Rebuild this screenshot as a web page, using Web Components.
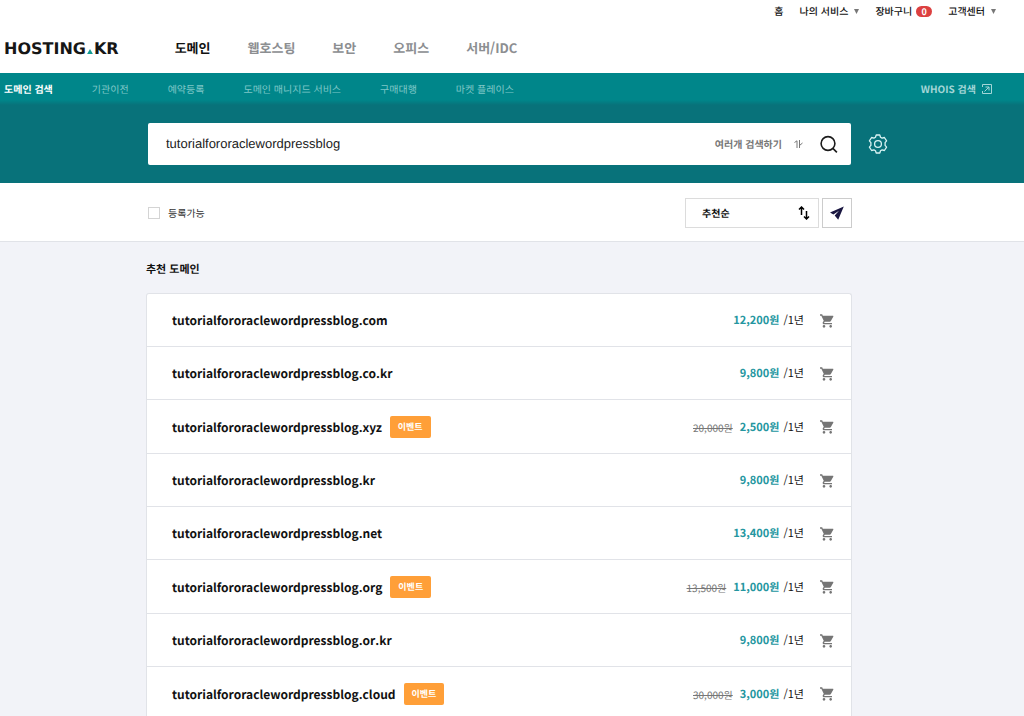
<!DOCTYPE html>
<html lang="ko">
<head>
<meta charset="utf-8">
<meta name="viewport" content="width=device-width, initial-scale=1">
<title>HOSTING.KR 도메인 검색</title>
<style>
  :root {
    --teal: #00868a;
    --teal-dark: #08727a;
    --ink: #111;
    --gutter: 26px;
    --column: 706px;
  }
  body {
    margin: 0;
    min-height: 100vh;
    overflow-x: hidden;
    background: #f2f3f8;
    color: var(--ink);
    font-family: "Noto Sans CJK KR", "Noto Sans", sans-serif;
    font-size: 10px;
    line-height: 16px;
    text-rendering: geometricPrecision;
  }
</style>
</head>
<body>
<site-header>
  <util-link slot="util">홈</util-link>
  <util-link slot="util" menu>나의 서비스</util-link>
  <util-link slot="util" count="0">장바구니</util-link>
  <util-link slot="util" menu>고객센터</util-link>
  <nav-link slot="nav" current>도메인</nav-link>
  <nav-link slot="nav">웹호스팅</nav-link>
  <nav-link slot="nav">보안</nav-link>
  <nav-link slot="nav">오피스</nav-link>
  <nav-link slot="nav">서버/IDC</nav-link>
</site-header>
<sub-nav>
  <sub-link current>도메인 검색</sub-link>
  <sub-link>기관이전</sub-link>
  <sub-link>예약등록</sub-link>
  <sub-link>도메인 매니지드 서비스</sub-link>
  <sub-link>구매대행</sub-link>
  <sub-link>마켓 플레이스</sub-link>
</sub-nav>
<domain-search value="tutorialfororaclewordpressblog"></domain-search>
<filter-bar></filter-bar>
<domain-list>
  <span slot="title">추천 도메인</span>
  <domain-row name="tutorialfororaclewordpressblog.com" price="12,200원"></domain-row>
  <domain-row name="tutorialfororaclewordpressblog.co.kr" price="9,800원"></domain-row>
  <domain-row name="tutorialfororaclewordpressblog.xyz" price="2,500원" was="20,000원"></domain-row>
  <domain-row name="tutorialfororaclewordpressblog.kr" price="9,800원"></domain-row>
  <domain-row name="tutorialfororaclewordpressblog.net" price="13,400원"></domain-row>
  <domain-row name="tutorialfororaclewordpressblog.org" price="11,000원" was="13,500원"></domain-row>
  <domain-row name="tutorialfororaclewordpressblog.or.kr" price="9,800원"></domain-row>
  <domain-row name="tutorialfororaclewordpressblog.cloud" price="3,000원" was="30,000원"></domain-row>
</domain-list>

<script>
const base = `
  *, *::before, *::after { box-sizing: border-box; }
  a { color: inherit; text-decoration: none; }
  svg { display: block; flex: none; }
  button, input, select { font: inherit; color: inherit; text-rendering: inherit; margin: 0; padding: 0; border: 0; background: none; border-radius: 0; }
  button { cursor: pointer; }
`;

class BaseElement extends HTMLElement {
  connectedCallback() {
    if (this.shadowRoot) return;
    this.attachShadow({ mode: 'open' }).innerHTML = `<style>${base}${this.css()}</style>${this.html()}`;
  }
  css() { return ''; }
  html() { return '<slot></slot>'; }
}

customElements.define('util-link', class extends BaseElement {
  css() { return `
    :host { display: block; }
    a { display: flex; align-items: center; gap: 6px; font-weight: 500; }
    .badge { min-width: 16px; height: 11px; border-radius: 6px; background: #dc4040; color: #fff; font-weight: 700; font-size: 9px; line-height: 11px; text-align: center; }
    a:has(.badge) { gap: 4px; }`; }
  html() {
    const tail = this.hasAttribute('menu')
      ? '<svg width="5" height="5" viewBox="0 0 5 5" aria-hidden="true"><path d="M0 0h5L2.5 5z" fill="#777"/></svg>'
      : this.hasAttribute('count') ? `<span class="badge">${this.getAttribute('count')}</span>` : '';
    return `<a href="#"><slot></slot>${tail}</a>`;
  }
});

customElements.define('nav-link', class extends BaseElement {
  css() { return `
    :host { display: block; font-size: 13px; line-height: 20px; font-weight: 700; color: #8c8e91; }
    :host([current]) { color: var(--ink); }`; }
  html() { return '<a href="#"><slot></slot></a>'; }
});

customElements.define('site-header', class extends BaseElement {
  css() { return `
    :host { display: block; background: #fff; }
    .util { display: flex; justify-content: flex-end; gap: 16px; padding: 3px 28px 3px 4px; }
    .main { display: flex; align-items: center; gap: 56px; padding: 15px 4px 14px; }
    .logo { display: flex; align-items: baseline; gap: 1px; padding-top: 2px; font: 700 16px/20px "DejaVu Sans", sans-serif; color: #161616; }
    nav { display: flex; gap: 37px; }`; }
  html() { return `
    <header>
      <div class="util"><slot name="util"></slot></div>
      <div class="main">
        <a class="logo" href="#" aria-label="HOSTING.KR"><span>HOSTING</span><svg width="6" height="5" viewBox="0 0 7 6" aria-hidden="true"><path d="M3.5 0 7 6H0z" fill="#129c93"/></svg><span>KR</span></a>
        <nav><slot name="nav"></slot></nav>
      </div>
    </header>`; }
});

customElements.define('sub-link', class extends BaseElement {
  css() { return `
    :host { display: block; color: #7fc6c7; }
    :host([current]) { color: #fff; font-weight: 700; }`; }
  html() { return '<a href="#"><slot></slot></a>'; }
});

customElements.define('sub-nav', class extends BaseElement {
  css() { return `
    :host { display: block; background: linear-gradient(to top, var(--teal-dark), var(--teal) 5px); }
    nav { display: flex; align-items: center; gap: 39px; padding: 8px 32px 8px 4px; }
    .whois { display: flex; align-items: center; gap: 6px; margin-left: auto; color: #a3d6d7; font-weight: 700; }`; }
  html() { return `
    <nav>
      <slot></slot>
      <a class="whois" href="#">WHOIS 검색
        <svg width="10" height="10" viewBox="0 0 10 10" fill="none" stroke="currentColor" aria-hidden="true"><path d="M.5 3V.5h9v9H.5V7M3.500 3h3.500v3.500M7 3 2.500 7.500"/></svg>
      </a>
    </nav>`; }
});

customElements.define('domain-search', class extends BaseElement {
  css() { return `
    :host { display: block; background: var(--teal-dark); padding: 18px var(--gutter) 18px 0; }
    form { display: grid; grid-template-columns: 1fr minmax(0, var(--column)) 1fr; align-items: center; }
    .box { grid-column: 2; display: flex; align-items: center; height: 42px; margin: 0 1px 0 2px; padding: 0 12px 0 18px; background: #fff; border-radius: 2px; }
    input { flex: 1; min-width: 0; font: 13px/20px "Liberation Sans", Arial, sans-serif; color: #222; outline: 0; }
    .multi { display: flex; align-items: center; gap: 12px; margin-right: 16px; color: #777; font-weight: 700; }
    .gear { justify-self: start; margin-left: 16px; color: #d9f3f3; }`; }
  html() { return `
    <form role="search" onsubmit="return false">
      <div class="box">
        <input type="text" aria-label="도메인 검색" value="${this.getAttribute('value')}">
        <button class="multi" type="button">여러개 검색하기
          <svg width="9" height="8" viewBox="0 0 9 8" fill="none" stroke="#777" aria-hidden="true"><path d="M.500 2.500 3 .8V8M5.500 0v8M5.500 5.500 8.500 3"/></svg>
        </button>
        <button type="submit" aria-label="검색">
          <svg width="20" height="20" viewBox="0 0 20 20" fill="none" stroke="#1b1b1b" stroke-width="1.600" aria-hidden="true"><circle cx="9" cy="9.500" r="6.900"/><path d="m13.900 14.400 4 4"/></svg>
        </button>
      </div>
      <button class="gear" type="button" aria-label="검색 설정">
        <svg width="20" height="20" viewBox="0 0 20 20" fill="none" stroke="currentColor" stroke-width="1.300" stroke-linejoin="round" aria-hidden="true"><path d="M8.200 1h3.600l.7 2.200 1.600.9 2.300-.6 2.200 3.300-1.500 1.800v2.800l1.500 1.800-2.200 3.300-2.300-.6-1.600.9-.7 2.200H8.200l-.7-2.200-1.600-.9-2.300.6-2.200-3.300 1.500-1.800V8.600L1.400 6.800l2.200-3.300 2.300.6 1.600-.9z"/><circle cx="10" cy="10" r="3.400"/></svg>
      </button>
    </form>`; }
});

customElements.define('filter-bar', class extends BaseElement {
  css() { return `
    :host { display: block; background: #fff; border-bottom: 1px solid #e1e3e8; padding: 15px var(--gutter) 13px 0; }
    .row { display: flex; align-items: center; gap: 3px; max-width: var(--column); margin: 0 auto; }
    label.check { display: flex; align-items: center; gap: 8px; margin: 0 auto 0 2px; color: #333; }
    input { appearance: none; width: 12px; height: 12px; border: 1px solid #d4d4d4; background: #fff; }
    input:checked { background: var(--teal); }
    .sort { display: grid; align-items: center; width: 134px; height: 30px; border: 1px solid #dcdcdc; }
    .sort > * { grid-area: 1 / 1; }
    select { appearance: none; width: 100%; height: 28px; padding: 0 16px; font-weight: 700; outline: 0; }
    .sort svg { justify-self: end; margin-right: 8px; pointer-events: none; }
    .send { display: grid; place-items: center; width: 30px; height: 30px; border: 1px solid #ccc; }`; }
  html() { return `
    <div class="row">
      <label class="check"><input type="checkbox">등록가능</label>
      <div class="sort">
        <select aria-label="정렬"><option>추천순</option></select>
        <svg width="12" height="14" viewBox="0 0 12 14" fill="none" stroke="#000" stroke-width="1.500" aria-hidden="true"><path d="M3.500 9V1.500M1 3.500 3.500 1 6 3.500M8.500 5v7.500M6 10.500 8.500 13l2.500-2.500"/></svg>
      </div>
      <button class="send" type="button" aria-label="적용">
        <svg width="14" height="14" viewBox="0 0 14 14" fill="#191640" aria-hidden="true"><path d="M13.800.4 0 6.600l3.400 1.800 5.600-3.600-4.300 4.700L8.200 13.800z"/></svg>
      </button>
    </div>`; }
});

customElements.define('domain-list', class extends BaseElement {
  css() { return `
    :host { display: block; padding: 17px var(--gutter) 0 0; }
    section { max-width: var(--column); margin: 0 auto; }
    h2 { margin: 0 0 14px; font-size: 11px; line-height: 20px; font-weight: 700; }
    .list { background: #fff; border: 1px solid #e1e3e8; border-bottom: 0; border-radius: 3px 3px 0 0; }`; }
  html() { return `<section><h2><slot name="title"></slot></h2><div class="list" role="list"><slot></slot></div></section>`; }
});

customElements.define('domain-row', class extends BaseElement {
  connectedCallback() { this.setAttribute('role', 'listitem'); super.connectedCallback(); }
  css() { return `
    :host { display: flex; align-items: center; padding: 16px 17px 15px 25px; border-bottom: 1px solid #e1e3e8; font-size: 11px; line-height: 21px; }
    .name { font-size: 12px; font-weight: 700; }
    .badge { margin-left: 8px; padding: 0 8px; border-radius: 2px; background: #ff9f38; color: #fff; font-size: 9px; line-height: 22px; font-weight: 700; }
    .cost { display: flex; align-items: center; gap: 4px; margin: 0 16px 0 auto; }
    s { margin-right: 3px; font-size: 10px; color: #777; }
    strong { color: #2496a0; font-weight: 700; }`; }
  html() {
    const was = this.getAttribute('was');
    return `
      <a class="name" href="#">${this.getAttribute('name')}</a>
      ${was ? '<span class="badge">이벤트</span>' : ''}
      <div class="cost">${was ? `<s>${was}</s>` : ''}<strong>${this.getAttribute('price')}</strong><span>/1년</span></div>
      <button type="button" aria-label="장바구니 담기">
        <svg width="14" height="14" viewBox="1 2 21 20" fill="#757575" aria-hidden="true"><path d="M7 18c-1.100 0-2 .9-2 2s.9 2 2 2 2-.9 2-2-.9-2-2-2zM1 2v2h2l3.600 7.600-1.400 2.400c-.1.300-.2.600-.2 1 0 1.100.9 2 2 2h12v-2H7.400c-.1 0-.2-.1-.2-.2l.9-1.800h7.500c.7 0 1.400-.4 1.700-1l3.600-6.500c.6-1-.1-1.500-.9-1.500H5.200L4.300 2H1zm16 16c-1.100 0-2 .9-2 2s.9 2 2 2 2-.9 2-2-.9-2-2-2z"/></svg>
      </button>`;
  }
});
</script>
</body>
</html>
